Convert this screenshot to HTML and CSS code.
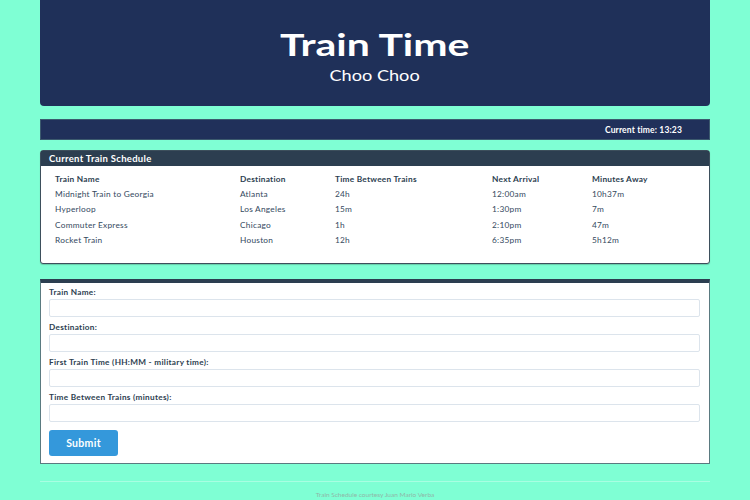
FILE: index.html
```html
<!DOCTYPE html>
<html>
<head>
<meta charset="utf-8">
<link rel="stylesheet" href="styles.css">
</head>
<body>
<div class="container">
  <header class="jumbo">
    <h1><span class="wide">Train Time</span></h1>
    <p><span class="wide-sm">Choo Choo</span></p>
  </header>
  <div class="timebar">Current time: 13:23</div>
  <section class="panel">
    <div class="panel-head">Current Train Schedule</div>
    <div class="panel-body">
      <table>
        <colgroup>
          <col class="c1"><col class="c2"><col class="c3"><col class="c4"><col class="c5">
        </colgroup>
        <thead>
          <tr><th>Train Name</th><th>Destination</th><th>Time Between Trains</th><th>Next Arrival</th><th>Minutes Away</th></tr>
        </thead>
        <tbody>
          <tr><td>Midnight Train to Georgia</td><td>Atlanta</td><td>24h</td><td>12:00am</td><td>10h37m</td></tr>
          <tr><td>Hyperloop</td><td>Los Angeles</td><td>15m</td><td>1:30pm</td><td>7m</td></tr>
          <tr><td>Commuter Express</td><td>Chicago</td><td>1h</td><td>2:10pm</td><td>47m</td></tr>
          <tr><td>Rocket Train</td><td>Houston</td><td>12h</td><td>6:35pm</td><td>5h12m</td></tr>
        </tbody>
      </table>
    </div>
  </section>
  <form class="formpanel">
    <label>Train Name:</label>
    <input type="text">
    <label>Destination:</label>
    <input type="text">
    <label>First Train Time (HH:MM - military time):</label>
    <input type="text">
    <label>Time Between Trains (minutes):</label>
    <input type="text">
    <button type="button">Submit</button>
  </form>
  <footer class="foot">Train Schedule courtesy Juan Mario Verba</footer>
</div>
</body>
</html>
```

FILE: styles.css
```css
* { box-sizing: border-box; }
html, body { margin: 0; padding: 0; }
body {
  background: #7fffd4;
  font-family: Lato, "Open Sans", sans-serif;
  color: #2c3e50;
}
.container {
  width: 670px;
  margin: 0 auto;
  display: flex;
  flex-direction: column;
}
.jumbo {
  background: #1f3059;
  height: 106px;
  border-radius: 0 0 4px 4px;
  color: #fff;
  text-align: center;
  padding-top: 26px;
}
.jumbo h1 {
  margin: 0;
  font-size: 31px;
  line-height: 36px;
  font-weight: 700;
}
.jumbo p {
  margin: 0;
  margin-top: 4px;
  font-size: 15.5px;
  line-height: 18px;
}
.wide {
  display: inline-block;
  transform: scaleX(1.32);
}
.wide-sm {
  display: inline-block;
  transform: scaleX(1.17);
}
.timebar {
  margin-top: 13px;
  height: 21px;
  background: #20305a;
  color: #fff;
  font-weight: 700;
  font-size: 8.5px;
  letter-spacing: 0.15px;
  line-height: 21px;
  text-align: right;
  padding-right: 27px;
  border: 1px solid #3b5a6e;
}
.panel {
  margin-top: 10px;
  border: 1px solid #3d4f5c;
  border-radius: 3px;
  background: #fff;
  height: 114px;
  box-shadow: 0 1px 1px rgba(0,0,0,0.2);
}
.panel-head {
  background: #2c3e50;
  color: #fff;
  font-weight: 700;
  font-size: 9.5px;
  letter-spacing: 0.3px;
  height: 15px;
  line-height: 15px;
  padding-left: 8px;
}
.panel-body {
  padding: 5px 9px 0 9px;
}
table {
  width: 100%;
  border-collapse: collapse;
  table-layout: fixed;
  font-size: 8.3px;
  letter-spacing: 0.25px;
}
col.c1 { width: 185px; }
col.c2 { width: 95px; }
col.c3 { width: 157px; }
col.c4 { width: 100px; }
th, td {
  text-align: left;
  padding: 0 5px;
  height: 15.3px;
  color: #2c3e50;
  white-space: nowrap;
}
th { font-weight: 700; }
td { font-weight: 400; color: #34495e; }
.formpanel {
  margin-top: 15px;
  background: #fff;
  border-top: 4px solid #2c3e50;
  border-left: 1px solid #5a7a80;
  border-right: 1px solid #5a7a80;
  border-bottom: 1px solid #5a7a80;
  padding: 4px 9px 7px 8px;
  display: flex;
  flex-direction: column;
}
.formpanel label {
  flex-shrink: 0;
  font-size: 8.2px;
  letter-spacing: 0.3px;
  font-weight: 700;
  color: #2c3e50;
  line-height: 10px;
  margin-bottom: 2px;
}
.formpanel input {
  flex-shrink: 0;
  height: 18px;
  border: 1px solid #dce4ec;
  border-radius: 2px;
  margin: 0 0 5px 0;
  background: #fff;
}
.formpanel button {
  flex-shrink: 0;
  align-self: flex-start;
  margin-top: 2.5px;
  width: 69px;
  height: 26px;
  background: #3498db;
  color: #fff;
  border: none;
  border-radius: 3px;
  font-family: Lato, sans-serif;
  font-weight: 700;
  font-size: 10.5px;
  letter-spacing: 0.3px;
}
.foot {
  margin-top: 17px;
  border-top: 1px solid #a8ffe2;
  padding-top: 9px;
  text-align: center;
  font-size: 6.5px;
  color: #8fb7a8;
}
```
